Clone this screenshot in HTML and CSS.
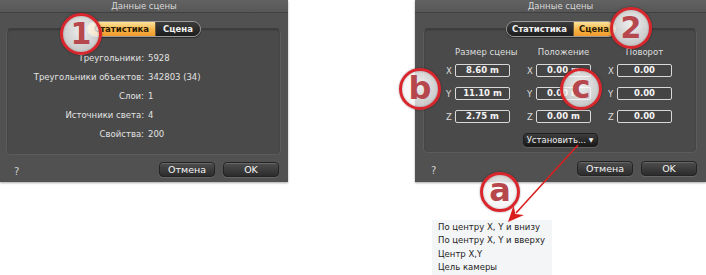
FILE: index.html
```html
<!DOCTYPE html>
<html lang="ru">
<head>
<meta charset="utf-8">
<title>Данные сцены</title>
<link rel="stylesheet" href="styles.css">
</head>
<body>
<div class="stage">
  <div class="dialogs">
    <section class="dialog dialog-left">
      <header class="titlebar">Данные сцены</header>
      <div class="seg">
        <span class="seg-item seg-a is-active">Статистика</span>
        <span class="seg-item seg-b">Сцена</span>
      </div>
      <div class="panel panel-stats">
        <dl class="stats">
          <dt>Треугольники:</dt><dd>5928</dd>
          <dt>Треугольники объектов:</dt><dd>342803 (34)</dd>
          <dt>Слои:</dt><dd>1</dd>
          <dt>Источники света:</dt><dd>4</dd>
          <dt>Свойства:</dt><dd>200</dd>
        </dl>
      </div>
      <footer class="footer">
        <span class="help">?</span>
        <div class="buttons">
          <button class="btn">Отмена</button>
          <button class="btn">OK</button>
        </div>
      </footer>
    </section>

    <section class="dialog dialog-right">
      <header class="titlebar">Данные сцены</header>
      <div class="seg">
        <span class="seg-item seg-c">Статистика</span>
        <span class="seg-item seg-d is-active">Сцена</span>
      </div>
      <div class="panel panel-scene">
        <div class="cols">
          <div class="col">
            <div class="col-head">Размер сцены</div>
            <div class="field-row"><span class="axis">X</span><span class="field">8.60 m</span></div>
            <div class="field-row"><span class="axis">Y</span><span class="field">11.10 m</span></div>
            <div class="field-row"><span class="axis">Z</span><span class="field">2.75 m</span></div>
          </div>
          <div class="col">
            <div class="col-head">Положение</div>
            <div class="field-row"><span class="axis">X</span><span class="field">0.00 m</span></div>
            <div class="field-row"><span class="axis">Y</span><span class="field">0.00 m</span></div>
            <div class="field-row"><span class="axis">Z</span><span class="field">0.00 m</span></div>
          </div>
          <div class="col">
            <div class="col-head">Поворот</div>
            <div class="field-row"><span class="axis">X</span><span class="field">0.00</span></div>
            <div class="field-row"><span class="axis">Y</span><span class="field">0.00</span></div>
            <div class="field-row"><span class="axis">Z</span><span class="field">0.00</span></div>
          </div>
        </div>
        <div class="set-wrap">
          <button class="set-btn">Установить... <span class="caret">▼</span></button>
        </div>
      </div>
      <footer class="footer footer-right">
        <span class="help">?</span>
        <div class="buttons">
          <button class="btn">Отмена</button>
          <button class="btn">OK</button>
        </div>
      </footer>
    </section>
  </div>

  <ul class="menu">
    <li>По центру X, Y и внизу</li>
    <li>По центру X, Y и вверху</li>
    <li>Центр X,Y</li>
    <li>Цель камеры</li>
  </ul>

  <svg class="arrow" width="706" height="275" viewBox="0 0 706 275">
    <line x1="578" y1="145" x2="516" y2="213" stroke="#d9201f" stroke-width="1.6"/>
    <polygon points="508,222 524,215 515.4,213.9 513.6,205.5" fill="#d9201f"/>
  </svg>

  <span class="badge badge-1">1</span>
  <span class="badge badge-2">2</span>
  <span class="badge badge-b">b</span>
  <span class="badge badge-c">c</span>
  <span class="badge badge-a">a</span>
</div>
</body>
</html>
```

FILE: styles.css
```css
* { box-sizing: border-box; }
html, body {
  margin: 0;
  padding: 0;
  background: #ffffff;
}
body {
  font-family: "DejaVu Sans", "Liberation Sans", sans-serif;
  width: 706px;
  height: 275px;
  overflow: hidden;
}
.stage {
  position: relative;
  width: 706px;
  height: 275px;
}
.dialogs {
  display: flex;
  gap: 127px;
}
.dialog {
  height: 182px;
  background: #515151;
  display: flex;
  flex-direction: column;
  box-shadow: 0 1px 2px rgba(0,0,0,0.35);
}
.dialog-left { width: 288px; }
.dialog-right { width: 291px; }

.titlebar {
  height: 13px;
  line-height: 12px;
  font-size: 8.5px;
  color: #d8d8d8;
  text-align: center;
  background: linear-gradient(#626262, #575757);
  border-bottom: 1px solid #404040;
}

.seg {
  position: relative;
  z-index: 1;
  align-self: center;
  display: flex;
  height: 16px;
  margin-top: 8px;
  margin-bottom: -9px;
  border-radius: 8px;
  border: 1px solid #9a9a9a;
  overflow: hidden;
  box-shadow: 0 1px 1px rgba(0,0,0,0.4);
}
.seg-item {
  display: flex;
  align-items: center;
  justify-content: center;
  font-size: 8.5px;
  font-weight: bold;
  color: #f2f2f2;
  background: linear-gradient(#3c3c3c, #1c1c1c);
}
.seg-item.is-active {
  color: #2a1a00;
  background: linear-gradient(#fde39a, #f6b54a 55%, #f09a2a);
}
.seg-a { width: 68px; border-right: 1px solid #6a5a3a; }
.seg-b { width: 44px; }
.seg-c { width: 67px; border-right: 1px solid #6a5a3a; }
.seg-d { width: 41px; }

.panel {
  background: #4a4a4a;
  border: 1px solid #5c5c5c;
  border-top-color: #3e3e3e;
  border-radius: 5px;
  box-shadow: inset 0 1px 2px rgba(0,0,0,0.25);
}
.dialog-left .panel {
  margin: 0 7px 0 6px;
  height: 127px;
  padding-top: 19px;
}
.dialog-right .panel {
  margin: 0 9px 0 8px;
  height: 125px;
  padding-top: 17px;
}

.stats {
  margin: 0;
  display: grid;
  grid-template-columns: 137px auto;
  column-gap: 4px;
  grid-auto-rows: 19px;
  align-items: center;
  font-size: 8.5px;
  color: #e2e2e2;
}
.stats dt { text-align: right; }
.stats dd { margin: 0; }

.footer {
  flex: 1;
  display: flex;
  align-items: flex-start;
  justify-content: space-between;
  padding: 7px 9px 0 14px;
}
.footer-right { padding-top: 8px; padding-left: 16px; }
.help {
  font-size: 10px;
  color: #d0d0d0;
  line-height: 15px;
  padding-top: 2px;
}
.buttons {
  display: flex;
  gap: 8px;
}
.btn {
  width: 56px;
  height: 15px;
  padding: 0;
  font-family: inherit;
  font-size: 9.5px;
  color: #f4f4f4;
  line-height: 13px;
  border: 1px solid #242424;
  border-radius: 4px;
  background: linear-gradient(#4e4e4e, #2c2c2c);
  box-shadow: 0 1px 0 rgba(255,255,255,0.12), inset 0 1px 0 rgba(255,255,255,0.15);
}

.cols {
  display: grid;
  grid-template-columns: repeat(3, 67px);
  column-gap: 14px;
  padding-left: 19px;
}
.col {
  display: flex;
  flex-direction: column;
  gap: 10px;
}
.col-head {
  height: 12px;
  line-height: 12px;
  padding-left: 12px;
  text-align: center;
  font-size: 8.5px;
  color: #dedede;
  white-space: nowrap;
  margin-bottom: -4px;
}
.field-row {
  display: flex;
  align-items: center;
  height: 13px;
}
.axis {
  width: 12px;
  font-size: 8.5px;
  color: #dedede;
  text-align: left;
  padding-left: 3px;
}
.field {
  width: 55px;
  height: 13px;
  line-height: 11px;
  border: 1px solid #d8d8d8;
  border-radius: 2px;
  background: #444;
  text-align: center;
  font-size: 8.5px;
  font-weight: bold;
  color: #f4f4f4;
}
.set-wrap {
  display: flex;
  justify-content: center;
  margin-top: 10px;
}
.set-btn {
  height: 14px;
  width: 75px;
  padding: 0;
  font-family: inherit;
  font-size: 8.5px;
  color: #f0f0f0;
  border: 1px solid #1e1e1e;
  border-radius: 4px;
  background: linear-gradient(#3e3e3e, #181818);
  box-shadow: 0 1px 0 rgba(255,255,255,0.12);
  line-height: 12px;
}
.caret { font-size: 6px; vertical-align: 1px; }

.menu {
  position: absolute;
  left: 432px;
  top: 220px;
  width: 120px;
  height: 55px;
  margin: 0;
  padding: 1px 0 0 6px;
  list-style: none;
  background: #f4f5f7;
  font-size: 8.5px;
  line-height: 13.4px;
  color: #1e1e1e;
}

.arrow {
  position: absolute;
  left: 0;
  top: 0;
  pointer-events: none;
  z-index: 3;
}

.badge {
  position: absolute;
  z-index: 2;
  width: 42px;
  height: 42px;
  border-radius: 50%;
  border: 3px solid #d9262c;
  background: radial-gradient(circle at 50% 40%, rgba(255,255,255,0.9), rgba(235,235,235,0.7));
  box-shadow: 0 0 2px rgba(0,0,0,0.45), inset 0 0 2px rgba(0,0,0,0.3);
  display: flex;
  align-items: center;
  justify-content: center;
  font-family: "DejaVu Sans", sans-serif;
  font-weight: bold;
  font-size: 30px;
  color: #b6474d;
  line-height: 1;
}
.badge-1 { left: 60px; top: 13px; }
.badge-2 { left: 610px; top: 7px; }
.badge-b { left: 399px; top: 68px; font-size: 32px; padding-bottom: 3px; }
.badge-c { left: 560px; top: 68px; font-size: 32px; padding-bottom: 5px; }
.badge-a { left: 480px; top: 172px; width: 40px; height: 40px; font-size: 32px; padding-bottom: 5px; }
```
